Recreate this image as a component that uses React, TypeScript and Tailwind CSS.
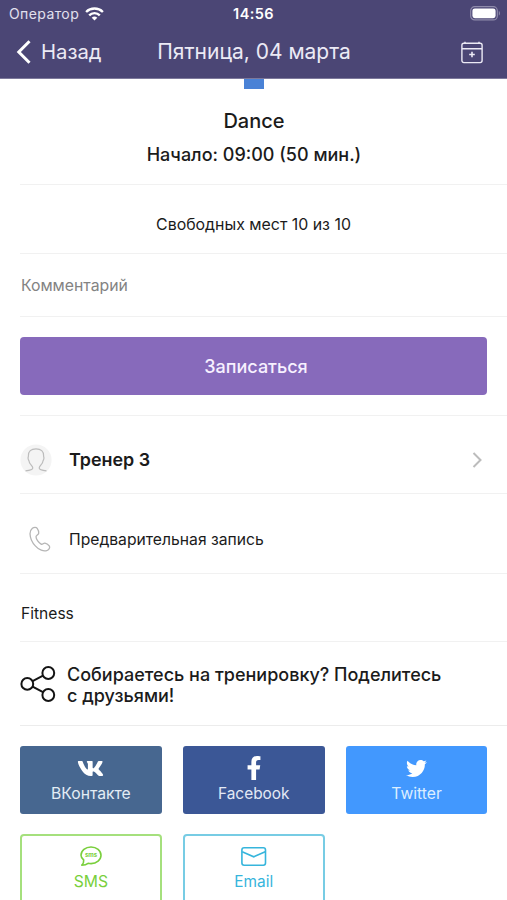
import React from "react";
import { FaFacebookF, FaTwitter, FaVk } from "react-icons/fa";

const WifiIcon = () => (
  <svg width="19" height="14" viewBox="0 0 19 14" fill="#fff">
    <path d="M9.5 13.6 6.7 10.8a4 4 0 0 1 5.6 0z" />
    <g fill="none" stroke="#fff" strokeWidth="2.4">
      <path d="M4.2 8.3a7.5 7.5 0 0 1 10.6 0" />
      <path d="M1.1 5a12 12 0 0 1 16.8 0" />
    </g>
  </svg>
);

const BatteryIcon = () => (
  <svg width="31" height="15" viewBox="0 0 31 15" fill="none">
    <rect x="0.7" y="0.7" width="26.6" height="13.2" rx="4" stroke="#8f8bab" strokeWidth="1.2" />
    <rect x="2.4" y="2.4" width="23.2" height="9.8" rx="2.4" fill="#fff" />
    <path d="M28.8 5c1.5.6 1.5 4 0 4.6z" fill="#8f8bab" />
  </svg>
);

const CalendarIcon = () => (
  <svg width="22" height="23" viewBox="0 0 22 23" fill="none" stroke="#eceaf5" strokeWidth="1.4">
    <rect x="0.9" y="2.2" width="20.2" height="19.4" rx="2" />
    <path d="M1 7.8h20M4 .8v1.6M18 .8v1.6" />
    <path d="M11 10.7v5.6M8.2 13.5h5.6" strokeWidth="1.6" />
  </svg>
);

const PersonIcon = () => (
  <svg width="32" height="32" viewBox="0 0 32 32" fill="none">
    <circle cx="16" cy="16" r="15.6" fill="#f4f4f4" />
    <path
      d="M5.5 26.8c3.2-.3 7.3-.8 7.3-2.8 0-1.800-1.900-2.900-3-4.800-.4-.7-.5-1.500-.8-2.300-.5-.9-1.200-1.900-.9-3.300.1-.6.3-1 .3-1.700C8.200 7.300 11 4.800 16 4.800s7.800 2.500 7.600 7.100c0 .7.2 1.100.3 1.700.3 1.400-.4 2.400-.9 3.300-.3.800-.4 1.600-.8 2.300-1.100 1.900-3 3-3 4.800 0 2 4.100 2.500 7.300 2.800"
      stroke="#bcbcbc"
      strokeWidth="1.2"
    />
  </svg>
);

const PhoneIcon = () => (
  <svg width="22" height="27" viewBox="0 0 22 27" fill="none" stroke="#b5b5b5" strokeWidth="1.3" strokeLinejoin="round">
    <path d="M3.4 2.300C5 1 7.200.9 8.200 2.300c1 1.400 1.700 3.500 1.500 5C9.400 8.900 7 9.300 7 10.800c0 2.400 2.800 6 5.100 7.300 1.500.8 2.400-1.400 4-.9 1.600.4 3.400 1.700 4.300 3 .9 1.500-.5 3.500-2.300 4.300-3.300 1.400-8.300-.6-11.800-4.600C3.300 16.700 1.200 12 1 7.700.9 5.500 1.900 3.600 3.400 2.300z" />
  </svg>
);

const ShareIcon = () => (
  <svg width="36" height="38" viewBox="0 0 36 38" fill="none" stroke="#141414" strokeWidth="2">
    <circle cx="7.3" cy="18.9" r="5.9" />
    <circle cx="28.3" cy="8" r="5.9" />
    <circle cx="28.3" cy="30" r="5.9" />
    <path d="M12.6 16.2 23 10.7M12.6 21.6 23 27.2" />
  </svg>
);

const SmsIcon = () => (
  <svg width="22" height="21" viewBox="0 0 22 21" fill="none" stroke="#79cf3c" strokeWidth="1.6">
    <path
      d="M3.700 14C2 12.700 1 11.100 1 9.300 1 4.700 5.400 1 11 1s10 3.700 10 8.300-4.400 8.300-10 8.300c-1 0-2-.1-2.900-.3-1.700 1.300-3.900 1.800-6.300 1.900C3.200 17.900 3.900 16.200 3.700 14z"
      strokeLinejoin="round"
    />
    <text x="11" y="11.3" textAnchor="middle" fill="#79cf3c" stroke="none" className="font-['Inter'] text-[6px] font-bold">
      sms
    </text>
  </svg>
);

const MailIcon = () => (
  <svg width="26" height="19" viewBox="0 0 26 19" fill="none" stroke="#36b5dc" strokeWidth="1.6">
    <rect x="0.9" y="0.8" width="23.6" height="17.4" rx="2.2" />
    <path d="M1.2 4.800 12.700 9.800 24.200 4.800" />
  </svg>
);

const App: React.FC = () => {
  return (
    <div className="h-[900px] w-full overflow-hidden bg-white font-['Inter',sans-serif] text-[#1b1b1b]">
      {/* Header */}
      <header className="h-[79px] border-b border-[#7d799b] bg-[#4b4675] text-white">
        <div className="grid h-[27px] grid-cols-3 items-center pl-[9px] pr-[6px]">
          <div className="flex items-center gap-[6px] text-[#e2e0ee]">
            <span className="text-[14px] tracking-[0.4px]">Оператор</span>
            <WifiIcon />
          </div>
          <span className="pr-[3px] text-center text-[14.5px] font-semibold tracking-[0.4px]">14:56</span>
          <div className="flex justify-end">
            <BatteryIcon />
          </div>
        </div>
        <div className="grid h-[50px] grid-cols-[120px_1fr_120px] items-center px-4 text-[#eceaf5]">
          <div className="flex items-center gap-[10px]">
            <svg width="15" height="24" viewBox="0 0 15 24" fill="none" stroke="#fff" strokeWidth="3">
              <path d="M13.5 1.2 2.8 12l10.7 10.8" />
            </svg>
            <span className="text-[20.3px]">Назад</span>
          </div>
          <h1 className="whitespace-nowrap pl-px text-center text-[21px]">Пятница, 04 марта</h1>
          <div className="flex justify-end pr-2">
            <CalendarIcon />
          </div>
        </div>
      </header>

      <main className="pl-5">
        {/* Class info */}
        <section className="flex h-[106px] flex-col items-center border-b border-[#f1f1f1] pr-5">
          <div className="h-[10px] w-5 bg-[#4a82d6]" />
          <h2 className="mt-[18px] pl-px text-[20px] leading-7 font-medium">Dance</h2>
          <p className="mt-2 pl-px text-[18px] leading-6 font-medium">Начало: 09:00 (50 мин.)</p>
        </section>
        <p className="flex h-[69px] items-center justify-center border-b border-[#f1f1f1] pt-3 pr-5 text-[15.9px]">
          Свободных мест 10 из 10
        </p>

        {/* Comment */}
        <div className="flex h-[63px] items-center border-b border-[#f1f1f1] pt-[2px]">
          <span className="pl-px text-[15.8px] text-[#838383]">Комментарий</span>
        </div>
        <div className="h-[99px] border-b border-[#f1f1f1] pt-5 pr-5">
          <button type="button" className="h-[58px] w-full rounded-[4px] bg-[#876abb] pl-[5px] text-[18px] font-medium text-[#f7f0ff]">
            Записаться
          </button>
        </div>

        {/* Trainer */}
        <div className="flex h-[78px] items-center border-b border-[#f1f1f1] pt-[11px] pr-[25px]">
          <PersonIcon />
          <span className="ml-[17px] flex-1 pt-px text-[17.9px] font-semibold">Тренер 3</span>
          <svg width="10" height="16" viewBox="0 0 10 16" fill="none" stroke="#bcbcbc" strokeWidth="2">
            <path d="M1.5 1 8.5 8l-7 7" />
          </svg>
        </div>
        <div className="flex h-[80px] items-center border-b border-[#f1f1f1] pt-3 pl-[9px]">
          <PhoneIcon />
          <span className="ml-[18px] text-[15.7px]">Предварительная запись</span>
        </div>
        <div className="flex h-[68px] items-center border-b border-[#f1f1f1] pt-3">
          <span className="pl-px text-[15.6px]">Fitness</span>
        </div>

        {/* Share */}
        <div className="flex h-[84px] items-center gap-[11px] border-b border-[#ececec]">
          <ShareIcon />
          <p className="whitespace-nowrap pt-[2px] text-[18px] leading-[21px] font-medium">
            Собираетесь на тренировку? Поделитесь
            <br />
            с друзьями!
          </p>
        </div>
        <div className="grid grid-cols-3 gap-x-[21px] gap-y-5 pt-5 pr-[19.5px] text-[15.7px] leading-5">
          <button type="button" className="flex h-[68px] flex-col items-center rounded-[3px] bg-[#476790] text-[#e3edf5]">
            <span className="flex h-[38px] items-center pt-[6px]">
              <FaVk size={27} color="#fff" />
            </span>
            ВКонтакте
          </button>
          <button type="button" className="flex h-[68px] flex-col items-center rounded-[3px] bg-[#3b5796] text-[#e3e9f5]">
            <span className="flex h-[38px] items-center pt-[6px]">
              <FaFacebookF size={24} color="#fff" />
            </span>
            <span className="text-[15.4px]">Facebook</span>
          </button>
          <button type="button" className="flex h-[68px] flex-col items-center rounded-[3px] bg-[#4298fe] text-[#dceeff]">
            <span className="flex h-[38px] items-center pt-[6px]">
              <FaTwitter size={21} color="#fff" />
            </span>
            Twitter
          </button>
          <button type="button" className="flex h-[70px] flex-col items-center rounded-[4px] border-2 border-[#a5e07d] text-[#79cf3c]">
            <span className="flex h-[36px] items-center pt-[4px]">
              <SmsIcon />
            </span>
            SMS
          </button>
          <button type="button" className="flex h-[70px] flex-col items-center rounded-[4px] border-2 border-[#77cce4] text-[#36b5dc]">
            <span className="flex h-[36px] items-center pt-[4px]">
              <MailIcon />
            </span>
            <span className="text-[15.4px]">Email</span>
          </button>
        </div>
      </main>
    </div>
  );
};

export default App;
